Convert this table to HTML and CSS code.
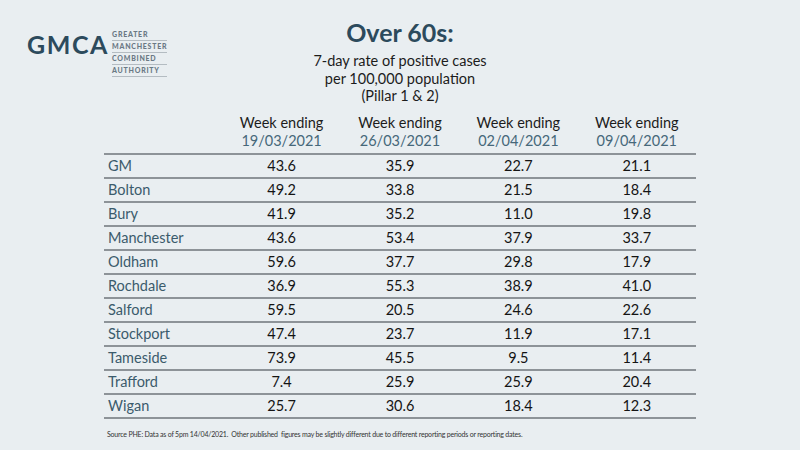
FILE: index.html
```html
<!DOCTYPE html>
<html lang="en">
<head>
<meta charset="utf-8">
<title>Over 60s</title>
<link rel="stylesheet" href="styles.css">
</head>
<body>
<div class="slide">
  <header class="top">
    <div class="logo">
      <span class="logo-mark">GMCA</span>
      <ul class="logo-words">
        <li>GREATER</li>
        <li>MANCHESTER</li>
        <li>COMBINED</li>
        <li>AUTHORITY</li>
      </ul>
    </div>
    <div class="titles">
      <h1 class="title">Over 60s:</h1>
      <p class="subtitle">7-day rate of positive cases<br>per 100,000 population<br>(Pillar 1 &amp; 2)</p>
    </div>
    <div class="spacer"></div>
  </header>

  <table class="rates">
    <thead>
      <tr>
        <th class="blank"></th>
        <th>Week ending<span class="date">19/03/2021</span></th>
        <th>Week ending<span class="date">26/03/2021</span></th>
        <th>Week ending<span class="date">02/04/2021</span></th>
        <th>Week ending<span class="date">09/04/2021</span></th>
      </tr>
    </thead>
    <tbody>
      <tr><td class="area">GM</td><td>43.6</td><td>35.9</td><td>22.7</td><td>21.1</td></tr>
      <tr><td class="area">Bolton</td><td>49.2</td><td>33.8</td><td>21.5</td><td>18.4</td></tr>
      <tr><td class="area">Bury</td><td>41.9</td><td>35.2</td><td>11.0</td><td>19.8</td></tr>
      <tr><td class="area">Manchester</td><td>43.6</td><td>53.4</td><td>37.9</td><td>33.7</td></tr>
      <tr><td class="area">Oldham</td><td>59.6</td><td>37.7</td><td>29.8</td><td>17.9</td></tr>
      <tr><td class="area">Rochdale</td><td>36.9</td><td>55.3</td><td>38.9</td><td>41.0</td></tr>
      <tr><td class="area">Salford</td><td>59.5</td><td>20.5</td><td>24.6</td><td>22.6</td></tr>
      <tr><td class="area">Stockport</td><td>47.4</td><td>23.7</td><td>11.9</td><td>17.1</td></tr>
      <tr><td class="area">Tameside</td><td>73.9</td><td>45.5</td><td>9.5</td><td>11.4</td></tr>
      <tr><td class="area">Trafford</td><td>7.4</td><td>25.9</td><td>25.9</td><td>20.4</td></tr>
      <tr><td class="area">Wigan</td><td>25.7</td><td>30.6</td><td>18.4</td><td>12.3</td></tr>
    </tbody>
  </table>

  <p class="source">Source PHE: Data as of 5pm 14/04/2021.&nbsp; Other published&nbsp; figures may be slightly different due to different reporting periods or reporting dates.</p>
</div>
</body>
</html>
```

FILE: styles.css
```css
html, body {
  margin: 0;
  padding: 0;
}

body {
  background: #e9eef1;
  font-family: Lato, "Open Sans", sans-serif;
}

.slide {
  width: 800px;
  height: 450px;
  box-sizing: border-box;
  background: #e9eef1;
  overflow: hidden;
}

.top {
  display: grid;
  grid-template-columns: 1fr auto 1fr;
  align-items: start;
}

.logo {
  display: flex;
  align-items: flex-start;
  padding: 29px 0 0 27px;
  gap: 3px;
}

.logo-mark {
  font-family: Lato, sans-serif;
  font-weight: 700;
  font-size: 25px;
  line-height: 30px;
  letter-spacing: 1.6px;
  color: #2c4a5c;
}

.logo-words {
  list-style: none;
  margin: 0;
  padding: 0;
  font-family: Lato, sans-serif;
  font-weight: 900;
  font-size: 7px;
  line-height: 10px;
  letter-spacing: 0.75px;
  color: #6b7985;
}

.logo-words li {
  border-bottom: 1px solid #b4bcc2;
  padding: 0 0 1px 0;
}

.titles {
  text-align: center;
}

.title {
  margin: 17px 0 0;
  font-weight: 700;
  font-size: 25px;
  line-height: 30px;
  color: #2c4a5c;
}

.subtitle {
  margin: 5px 0 0;
  font-size: 14.5px;
  line-height: 17.5px;
  color: #1c1c1c;
}

.rates {
  margin: 9px 0 0 104px;
  width: 592px;
  border-collapse: collapse;
  table-layout: fixed;
  font-size: 14.5px;
}

.rates th {
  font-weight: 400;
  color: #1c1c1c;
  text-align: center;
  line-height: 18px;
  padding: 0 0 3px;
}

.rates .date {
  display: block;
  color: #46687a;
}

.rates td {
  height: 22px;
  padding: 0;
  text-align: center;
  color: #141414;
  border-top: 2px solid #8d9398;
  line-height: 22px;
}

.rates tbody tr:last-child td {
  border-bottom: 2px solid #8d9398;
}

.rates td.area {
  text-align: left;
  padding-left: 4px;
  color: #3b5b6c;
}

.source {
  margin: 11px 0 0 107px;
  font-size: 7px;
  letter-spacing: -0.2px;
  color: #333;
  white-space: nowrap;
}
```
